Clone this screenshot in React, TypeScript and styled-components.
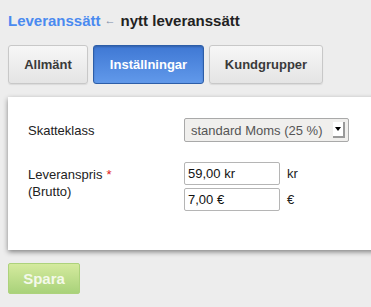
import React from "react";
import styled, { createGlobalStyle } from "styled-components";

const GlobalStyle = createGlobalStyle`
  html, body {
    margin: 0;
    padding: 0;
    overflow: hidden;
    background: #ededed;
    font-family: "Liberation Sans", Arial, sans-serif;
  }
`;

const Page = styled.div`
  width: 100vw;
  overflow: hidden;
  padding: 8px 0 10px 8px;
  box-sizing: border-box;
`;

const Breadcrumb = styled.div`
  display: flex;
  align-items: center;
  height: 20px;
  margin-top: 2px;
  font-size: 15px;
  font-weight: bold;
`;

const CrumbLink = styled.a`
  color: #4a8af0;
  text-decoration: none;
`;

const CrumbSep = styled.span`
  color: #7a8aa8;
  font-size: 11px;
  margin: 0 5px 0 4px;
`;

const CrumbCurrent = styled.span`
  color: #222;
`;

const Tabs = styled.div`
  display: flex;
  gap: 5px;
  margin-top: 15px;
`;

const Tab = styled.button<{ $active?: boolean; $width: number }>`
  width: ${(p) => p.$width}px;
  height: 39px;
  padding: 0;
  box-sizing: border-box;
  font-family: "Liberation Sans", Arial, sans-serif;
  font-size: 13px;
  font-weight: bold;
  border-radius: 3px;
  cursor: pointer;
  color: ${(p) => (p.$active ? "#fff" : "#3a3a3a")};
  border: 1px solid ${(p) => (p.$active ? "#2d5ea8" : "#c8c8c8")};
  background: ${(p) =>
    p.$active
      ? "linear-gradient(#3f78d4, #6199ea)"
      : "linear-gradient(#f7f7f7, #e4e4e4)"};
  box-shadow: ${(p) => (p.$active ? "inset 0 1px 2px rgba(0,0,0,0.2)" : "0 1px 1px rgba(0,0,0,0.08)")};
`;

const Panel = styled.div`
  margin-top: 13px;
  margin-right: -12px;
  height: 153px;
  background: #fff;
  box-shadow: 0 2px 5px rgba(0, 0, 0, 0.45);
  box-sizing: border-box;
  padding: 21px 0 0 20px;
`;

const Row = styled.div<{ $gap?: number }>`
  display: grid;
  grid-template-columns: 156px 1fr;
  align-items: start;
  margin-top: ${(p) => p.$gap ?? 0}px;
`;

const Label = styled.div`
  font-size: 13px;
  color: #222;
  line-height: 17px;
  padding-top: 4px;
`;

const Required = styled.span`
  color: #e02020;
  margin-left: 4px;
`;

const Select = styled.div`
  display: flex;
  align-items: center;
  justify-content: space-between;
  width: 165px;
  height: 24px;
  box-sizing: border-box;
  border: 1px solid #a9a9a9;
  border-radius: 2px;
  background: #f0efed;
  padding: 0 3px 0 6px;
  font-size: 13px;
  color: #555;
`;

const SelectArrow = styled.span`
  width: 10px;
  height: 14px;
  background: #fff;
  border-right: 2px solid #999;
  border-bottom: 2px solid #999;
  display: flex;
  align-items: center;
  justify-content: center;
  &::after {
    content: "";
    border-left: 3px solid transparent;
    border-right: 3px solid transparent;
    border-top: 4px solid #000;
  }
`;

const PriceRows = styled.div`
  display: flex;
  flex-direction: column;
  gap: 3px;
`;

const PriceRow = styled.div`
  display: flex;
  align-items: center;
  gap: 7px;
`;

const Input = styled.div`
  width: 96px;
  height: 23px;
  box-sizing: border-box;
  border: 1px solid #b5b5b5;
  border-radius: 2px;
  padding: 0 3px;
  font-size: 13px;
  line-height: 21px;
  color: #111;
  background: #fff;
`;

const Unit = styled.span`
  font-size: 13px;
  color: #222;
`;

const SaveButton = styled.button`
  margin-top: 13px;
  width: 72px;
  height: 31px;
  border: 1px solid #add27c;
  border-radius: 2px;
  background: linear-gradient(#d4ea9e, #a9d27a);
  color: #f4f9ea;
  font-family: "Liberation Sans", Arial, sans-serif;
  font-weight: bold;
  font-size: 15px;
  padding: 0;
`;

export default function App() {
  return (
    <>
      <GlobalStyle />
      <Page>
        <Breadcrumb>
          <CrumbLink>Leveranssätt</CrumbLink>
          <CrumbSep>←</CrumbSep>
          <CrumbCurrent>nytt leveranssätt</CrumbCurrent>
        </Breadcrumb>
        <Tabs>
          <Tab $width={80}>Allmänt</Tab>
          <Tab $active $width={111}>
            Inställningar
          </Tab>
          <Tab $width={114}>Kundgrupper</Tab>
        </Tabs>
        <Panel>
          <Row>
            <Label>Skatteklass</Label>
            <Select>
              standard Moms (25 %)
              <SelectArrow />
            </Select>
          </Row>
          <Row $gap={20}>
            <Label>
              Leveranspris<Required>*</Required>
              <br />
              (Brutto)
            </Label>
            <PriceRows>
              <PriceRow>
                <Input>59,00 kr</Input>
                <Unit>kr</Unit>
              </PriceRow>
              <PriceRow>
                <Input>7,00 €</Input>
                <Unit>€</Unit>
              </PriceRow>
            </PriceRows>
          </Row>
        </Panel>
        <SaveButton>Spara</SaveButton>
      </Page>
    </>
  );
}
